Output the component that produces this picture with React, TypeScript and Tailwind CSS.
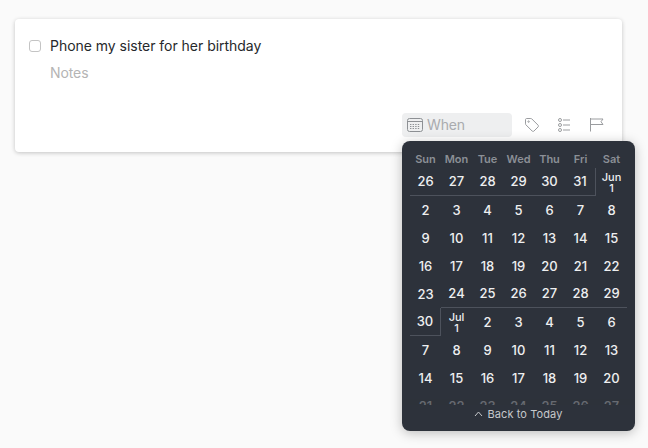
const headers = ['Sun', 'Mon', 'Tue', 'Wed', 'Thu', 'Fri', 'Sat'];

const weeks: (string | number)[][] = [
  [26, 27, 28, 29, 30, 31, 'Jun'],
  [2, 3, 4, 5, 6, 7, 8],
  [9, 10, 11, 12, 13, 14, 15],
  [16, 17, 18, 19, 20, 21, 22],
  [23, 24, 25, 26, 27, 28, 29],
  [30, 'Jul', 2, 3, 4, 5, 6],
  [7, 8, 9, 10, 11, 12, 13],
  [14, 15, 16, 17, 18, 19, 20],
  [21, 22, 23, 24, 25, 26, 27],
];

function cellBorder(w: number, d: number) {
  if (w === 0 && d < 5) return 'border-b border-[#4d525c]';
  if (w === 0 && d === 5) return 'border-b border-r border-[#4d525c]';
  if (w === 4 && d > 0) return 'border-b border-[#4d525c]';
  if (w === 5 && d === 0) return 'border-b border-r border-[#4d525c]';
  return '';
}

function CalendarIcon() {
  return (
    <svg width="16" height="14" viewBox="0 0 16 14" fill="none" stroke="#8d9094" strokeWidth="1">
      <rect x="0.5" y="0.5" width="15" height="13" rx="2" />
      <path d="M1 3.5h14" />
      <path d="M3 6.5h10M3 8.5h10M3 10.5h10" strokeDasharray="1.4 1.2" />
    </svg>
  );
}

function TagIcon() {
  return (
    <svg width="16" height="16" viewBox="0 0 16 16" fill="none" stroke="#9a9c9f" strokeWidth="1">
      <path d="M1.5 2.6c0-.6.5-1.1 1.1-1.1h4.2c.4 0 .7.1 1 .4l6.2 6.2c.6.6.6 1.3 0 1.9l-4 4c-.6.6-1.3.6-1.9 0L1.9 7.8c-.3-.3-.4-.6-.4-1z" />
      <circle cx="4.6" cy="4.6" r="0.7" />
    </svg>
  );
}

function ChecklistIcon() {
  return (
    <svg width="12" height="14" viewBox="0 0 12 14" fill="none" stroke="#9a9c9f" strokeWidth="1">
      <circle cx="2" cy="2" r="1.5" />
      <circle cx="2" cy="7" r="1.5" />
      <circle cx="2" cy="12" r="1.5" />
      <path d="M5 2h7M5 7h7M5 12h7" />
    </svg>
  );
}

function FlagIcon() {
  return (
    <svg width="14" height="14" viewBox="0 0 14 14" fill="none" stroke="#9a9c9f" strokeWidth="1">
      <path d="M0.5 0v13.5" />
      <path d="M0.5 1h12.5l-2 2.7 2 2.8H0.5" />
    </svg>
  );
}

export default function App() {
  return (
    <div className="relative h-[448px] w-[648px] overflow-hidden bg-[#fafafa] pl-[15px] pt-[19px] font-['Inter',sans-serif]">
      <div className="flex h-[133px] w-[607px] flex-col rounded-[4px] bg-white shadow-[0_1px_4px_rgba(0,0,0,0.22)]">
        <div className="flex items-center pl-[14px] pt-[18px]">
          <div className="h-[12px] w-[12px] rounded-[3px] border border-[#c4c4c4] bg-white" />
          <div className="ml-[9px] text-[14px] leading-[18px] tracking-[-0.03px] text-[#26282b]">Phone my sister for her birthday</div>
        </div>
        <div className="pl-[35px] pt-[9px] text-[14px] leading-[18px] tracking-[-0.1px] text-[#b4b4b4]">Notes</div>
        <div className="mt-auto flex items-center pb-[15px] pl-[387px]">
          <div className="flex h-[24px] w-[110px] items-center gap-[4px] rounded-[4px] bg-[#eeeff0] pl-[5px] text-[14px] leading-[22px] tracking-[-0.15px] text-[#a9abae]">
            <CalendarIcon />
            <span>When</span>
          </div>
          <div className="ml-[12px]"><TagIcon /></div>
          <div className="ml-[18px]"><ChecklistIcon /></div>
          <div className="ml-[20px]"><FlagIcon /></div>
        </div>
      </div>

      <div className="absolute left-[402px] top-[141px] flex h-[290px] w-[233px] flex-col overflow-hidden rounded-[8px] bg-[#2d323b] shadow-[0_2px_12px_rgba(0,0,0,0.25)]">
        <div className="grid grid-cols-[repeat(7,31px)] pl-[8px] pt-[11px]">
          {headers.map(h => (
            <div key={h} className="text-center text-[11px] font-semibold leading-[14px] text-[#8b8f96]">{h}</div>
          ))}
        </div>
        <div className="relative h-[239px] overflow-hidden pt-[2px]">
          <div className="grid grid-cols-[repeat(7,31px)] auto-rows-[28px] pl-[8px]">
            {weeks.map((row, w) =>
              row.map((day, d) => (
                <div key={`${w}-${d}`} className={`flex items-center justify-center pt-[1px] text-[13px] font-medium text-[#eeeff0] ${cellBorder(w, d)}`}>
                  {typeof day === 'string' ? (
                    <div className="text-center text-[11px] font-medium leading-[11px]">
                      <div>{day}</div>
                      <div>1</div>
                    </div>
                  ) : (
                    day
                  )}
                </div>
              )),
            )}
          </div>
          <div className="absolute bottom-0 left-0 h-[6px] w-full bg-[#2d323b]/70" />
        </div>
        <div className="flex items-center justify-center gap-[4px] pt-[1px] text-[11px] leading-[16px] tracking-[0.1px] text-[#c6c8cb]">
          <svg width="9" height="6" viewBox="0 0 9 6" fill="none" stroke="#c6c8cb" strokeWidth="1">
            <path d="M1 5l3.5-4L8 5" />
          </svg>
          <span>Back to Today</span>
        </div>
      </div>
    </div>
  );
}
